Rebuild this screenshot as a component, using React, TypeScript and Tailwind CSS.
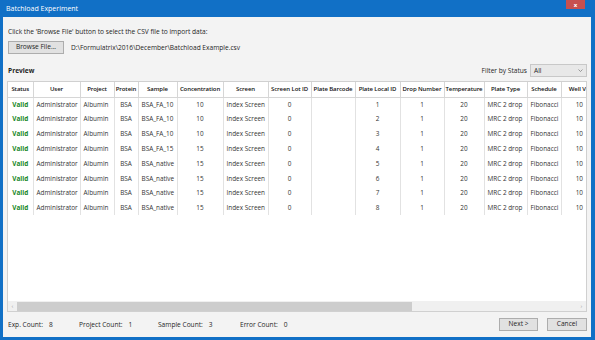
import React from "react";

const cols = [
  { label: "Status", w: 25 },
  { label: "User", w: 47 },
  { label: "Project", w: 34 },
  { label: "Protein", w: 24 },
  { label: "Sample", w: 39 },
  { label: "Concentration", w: 46 },
  { label: "Screen", w: 45 },
  { label: "Screen Lot ID", w: 43 },
  { label: "Plate Barcode", w: 44 },
  { label: "Plate Local ID", w: 45 },
  { label: "Drop Number", w: 44 },
  { label: "Temperature", w: 40 },
  { label: "Plate Type", w: 43 },
  { label: "Schedule", w: 34 },
  { label: "Well Volume", w: 50 },
];

const samples = ["BSA_FA_10", "BSA_FA_10", "BSA_FA_10", "BSA_FA_15", "BSA_native", "BSA_native", "BSA_native", "BSA_native"];
const conc = ["10", "10", "10", "15", "15", "15", "15", "15"];

const rows = samples.map((s, i) => ({ sample: s, conc: conc[i], id: String(i + 1) }));

const cell = "border-l border-[#e2e2e2] px-[3px] whitespace-nowrap overflow-hidden";

export default function App() {
  return (
    <div
      className="w-[595px] h-[340px] bg-[#1170c6] text-[#1e1e1e] overflow-hidden flex flex-col"
      style={{ fontFamily: '"Open Sans", "Noto Sans", sans-serif' }}
    >
      <div className="h-[17px] shrink-0 flex items-start justify-between pl-[6px] pr-[10px]">
        <span className="text-white text-[7px] leading-[17px]">Batchload Experiment</span>
        <div className="w-[19px] h-[9px] bg-[#c75050] flex items-center justify-center text-white text-[6px] leading-none font-bold">
          x
        </div>
      </div>

      <div className="ml-[3px] mr-[4px] mb-[3px] flex-1 bg-[#f3f3f3] flex flex-col px-[4px] text-[6.6px]">
        <p className="pt-[11px] pl-[1px] leading-[8px]">Click the 'Browse File' button to select the CSV file to import data:</p>
        <div className="mt-[5px] flex items-center gap-[7px] pl-[1px]">
          <button className="w-[56px] h-[13px] bg-[#e1e1e1] border border-[#adadad] text-[6.6px] leading-none">Browse File...</button>
          <span>D:\Formulatrix\2016\December\Batchload Example.csv</span>
        </div>

        <div className="mt-[10px] flex items-center justify-between pl-[1px]">
          <span className="font-bold">Preview</span>
          <div className="flex items-center gap-[3px]">
            <span>Filter by Status</span>
            <div className="w-[57px] h-[13px] bg-[#e8e8e8] border border-[#c8c8c8] flex items-center justify-between px-[3px]">
              <span>All</span>
              <svg width="5" height="3" viewBox="0 0 5 3">
                <path d="M0.5 0.5 L2.5 2.5 L4.5 0.5" stroke="#777" strokeWidth="0.7" fill="none" />
              </svg>
            </div>
          </div>
        </div>

        <div className="mt-[4px] h-[231px] bg-white border border-[#d0d0d0] flex flex-col overflow-hidden">
          <div className="flex-1 overflow-hidden">
            <table className="table-fixed border-collapse w-[603px] text-[6.4px]">
              <colgroup>
                {cols.map((c) => (
                  <col key={c.label} style={{ width: c.w }} />
                ))}
              </colgroup>
              <thead>
                <tr className="h-[15px]">
                  {cols.map((c, i) => (
                    <th
                      key={c.label}
                      className={`font-semibold text-[6px] tracking-[-0.1px] text-center text-[#111] border-b border-[#d6d6d6] whitespace-nowrap overflow-hidden ${i ? "border-l border-[#d6d6d6]" : ""}`}
                    >
                      {c.label}
                    </th>
                  ))}
                </tr>
              </thead>
              <tbody className="text-[#333]">
                {rows.map((r) => (
                  <tr key={r.id} className="h-[14.8px]">
                    <td className="text-center font-bold text-[#16861e] whitespace-nowrap">Valid</td>
                    <td className={cell}>Administrator</td>
                    <td className={cell}>Albumin</td>
                    <td className={`${cell} text-center`}>BSA</td>
                    <td className={cell}>{r.sample}</td>
                    <td className={`${cell} text-center`}>{r.conc}</td>
                    <td className={cell}>Index Screen</td>
                    <td className={`${cell} text-center`}>0</td>
                    <td className={cell}></td>
                    <td className={`${cell} text-center`}>{r.id}</td>
                    <td className={`${cell} text-center`}>1</td>
                    <td className={`${cell} text-center`}>20</td>
                    <td className={cell}>MRC 2 drop</td>
                    <td className={cell}>Fibonacci</td>
                    <td className={`${cell} text-right pr-[28px]`}>10</td>
                  </tr>
                ))}
              </tbody>
            </table>
          </div>
          <div className="h-[10px] bg-[#f0f0f0] flex items-center text-[#a0a0a0] text-[6px]">
            <span className="w-[9px] text-center">‹</span>
            <div className="w-[395px] h-[9px] bg-[#cdcdcd]" />
            <div className="flex-1" />
            <span className="w-[9px] text-center">›</span>
          </div>
        </div>

        <div className="flex-1 flex items-center justify-between pl-[1px]">
          <div className="flex items-center">
            <div className="w-[71px] flex gap-[6px]"><span>Exp. Count:</span><span>8</span></div>
            <div className="w-[79px] flex gap-[6px]"><span>Project Count:</span><span>1</span></div>
            <div className="w-[82px] flex gap-[6px]"><span>Sample Count:</span><span>3</span></div>
            <div className="flex gap-[6px]"><span>Error Count:</span><span>0</span></div>
          </div>
          <div className="flex gap-[9px]">
            <button className="w-[39px] h-[13px] bg-[#e1e1e1] border border-[#adadad] text-[6.6px] leading-none">Next &gt;</button>
            <button className="w-[40px] h-[13px] bg-[#e1e1e1] border border-[#adadad] text-[6.6px] leading-none">Cancel</button>
          </div>
        </div>
      </div>
    </div>
  );
}
